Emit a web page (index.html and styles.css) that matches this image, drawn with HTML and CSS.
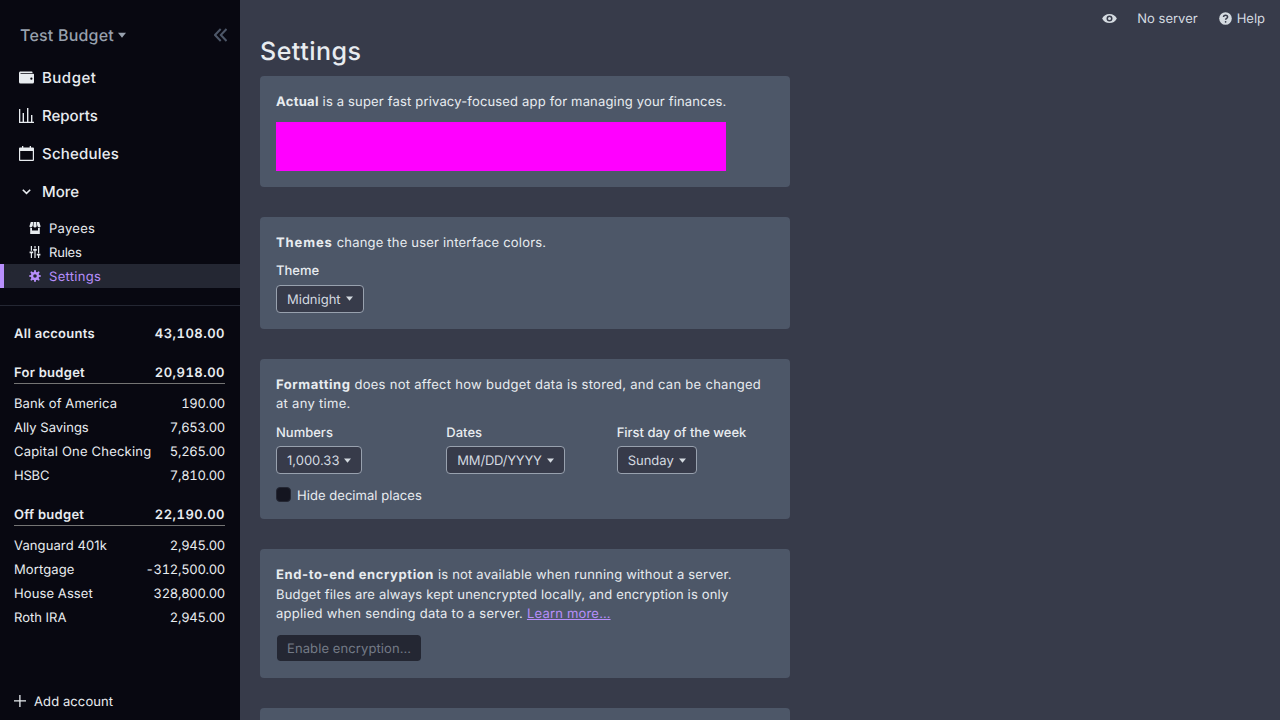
FILE: index.html
```html
<!DOCTYPE html>
<html lang="en">
<head>
<meta charset="utf-8">
<title>Settings</title>
<link rel="stylesheet" href="styles.css">
</head>
<body>
<div class="app">
  <aside class="sidebar">
    <div class="budget-name">
      <span class="ls-2">Test Budget</span>
      <svg class="caret" width="8" height="8" viewBox="0 0 8 8"><path d="M0 1.700h8L4 6.700z"/></svg>
      <svg class="collapse" width="13" height="14" viewBox="0 0 13 14"><path d="M6.700 1 1 7l5.700 6M12.500 1 6.800 7l5.700 6"/></svg>
    </div>
    <nav class="primary">
      <a class="nav-item ls-5"><svg width="15" height="15" viewBox="0 0 20 20"><path d="M0 4c0-1.100.9-2 2-2h15a1 1 0 0 1 1 1v1H2v1h17a1 1 0 0 1 1 1v10a2 2 0 0 1-2 2H2a2 2 0 0 1-2-2V4zm16.500 9a1.500 1.500 0 1 0 0-3 1.500 1.500 0 0 0 0 3z"/></svg>Budget</a>
      <a class="nav-item"><svg width="15" height="15" viewBox="0 0 15 15"><path d="M0 1h1.300v12.700H15V15H0zM3.600 5H5v9H3.600zM8 0h1.400v14H8zM12 7h1.400v7H12z"/></svg>Reports</a>
      <a class="nav-item ls-2"><svg width="15" height="15" viewBox="0 0 15 15"><path d="M1 1.500h2V0h1.300v1.500h6.400V0H12v1.500h2a1 1 0 0 1 1 1V14a1 1 0 0 1-1 1H1a1 1 0 0 1-1-1V2.500a1 1 0 0 1 1-1zM1.200 5v8.800h12.600V5z"/></svg>Schedules</a>
      <a class="nav-item"><svg width="15" height="15" viewBox="0 0 15 15"><path class="chevron" d="m3.800 5.700 3.700 3.700 3.700-3.700"/></svg>More</a>
    </nav>
    <nav class="secondary">
      <a class="sub-item ls-3"><svg width="12" height="12" viewBox="0 0 20 20"><path d="M18 9.870V20H2V9.870a4.250 4.250 0 0 0 3-.38V14h10V9.500a4.260 4.260 0 0 0 3 .37zM3 0h4l-.67 6.030A3.430 3.430 0 0 1 3 9C1.340 9 .42 7.730.95 6.150L3 0zm5 0h4l.7 6.300c.17 1.500-.91 2.700-2.420 2.700h-.56A2.380 2.380 0 0 1 7.300 6.300L8 0zm5 0h4l2.050 6.150C19.580 7.730 18.650 9 17 9a3.420 3.420 0 0 1-3.330-2.970L13 0z"/></svg>Payees</a>
      <a class="sub-item ls-tight"><svg width="12" height="12" viewBox="0 0 20 20"><path d="M17 16v4h-2v-4h-2v-3h6v3h-2zM1 9h6v3H1V9zm6-4h6v3H7V5zM3 0h2v8H3V0zm12 0h2v12h-2V0zM9 0h2v4H9V0zM3 12h2v8H3v-8zm6-4h2v12H9V8z"/></svg>Rules</a>
      <a class="sub-item active ls-3"><svg width="12" height="12" viewBox="0 0 20 20"><path d="M3.940 6.500L2.220 3.640l1.420-1.420L6.500 3.940c.52-.3 1.100-.54 1.700-.7L9 0h2l.8 3.240c.6.160 1.180.4 1.700.7l2.860-1.720 1.420 1.420-1.720 2.860c.3.520.54 1.100.7 1.700L20 9v2l-3.240.8c-.16.6-.4 1.180-.7 1.700l1.720 2.860-1.420 1.420-2.860-1.720c-.52.3-1.100.54-1.700.7L11 20H9l-.8-3.240c-.6-.16-1.180-.4-1.700-.7l-2.860 1.720-1.420-1.420 1.720-2.860c-.3-.52-.54-1.100-.7-1.700L0 11V9l3.240-.8c.16-.6.4-1.180.7-1.700zM10 13a3 3 0 1 0 0-6 3 3 0 0 0 0 6z"/></svg>Settings</a>
    </nav>
    <div class="accounts">
      <div class="row total"><span>All accounts</span><span class="num">43,108.00</span></div>
      <div class="row group"><span>For budget</span><span class="num">20,918.00</span></div>
      <div class="row"><span class="ls-1">Bank of America</span><span class="num">190.00</span></div>
      <div class="row"><span>Ally Savings</span><span class="num">7,653.00</span></div>
      <div class="row"><span class="ls-2">Capital One Checking</span><span class="num">5,265.00</span></div>
      <div class="row"><span class="ls-tight">HSBC</span><span class="num">7,810.00</span></div>
      <div class="row group"><span>Off budget</span><span class="num">22,190.00</span></div>
      <div class="row"><span class="ls-1">Vanguard 401k</span><span class="num">2,945.00</span></div>
      <div class="row"><span class="ls-1">Mortgage</span><span class="num">-312,500.00</span></div>
      <div class="row"><span class="ls-1">House Asset</span><span class="num">328,800.00</span></div>
      <div class="row"><span>Roth IRA</span><span class="num">2,945.00</span></div>
    </div>
    <a class="add-account ls-1"><svg width="12" height="12" viewBox="0 0 12 12"><path d="M5.250 0h1.300v5.250H12v1.300H6.550V12h-1.300V6.550H0v-1.300h5.250z"/></svg>Add account</a>
  </aside>
  <main class="main">
    <header class="titlebar">
      <svg class="eye" width="15" height="15" viewBox="0 0 20 20"><path d="M.2 10a11 11 0 0 1 19.600 0A11 11 0 0 1 .2 10zm9.800 4a4 4 0 1 0 0-8 4 4 0 0 0 0 8zm0-2a2 2 0 1 1 0-4 2 2 0 0 1 0 4z"/></svg>
      <span class="server">No server</span>
      <svg width="13" height="13" viewBox="0 0 13 13"><circle cx="6.500" cy="6.500" r="6.300"/><path class="question" d="M4.500 5.100c0-2.700 4.100-2.500 4.100-.2 0 1.400-2 1.500-2 2.900"/><circle class="dot" cx="6.600" cy="9.800" r=".85"/></svg>
      <span class="help">Help</span>
    </header>
    <h1 class="title">Settings</h1>
    <section class="card">
      <p class="text"><strong class="ls-3">Actual</strong> is a super fast privacy-focused app for managing your finances.</p>
      <div class="banner"></div>
    </section>
    <section class="card">
      <p class="text wide"><strong class="ls-9">Themes</strong> change the user interface colors.</p>
      <div class="field"><span class="label">Theme</span><button class="select">Midnight<svg width="7" height="8" viewBox="0 0 8 8"><path d="M0 1.200h8L4 6z"/></svg></button></div>
    </section>
    <section class="card">
      <p class="text format"><strong>Formatting</strong> does not affect how budget data is stored, and can be changed<br>at any time.</p>
      <div class="columns">
        <div class="field"><span class="label">Numbers</span><button class="select">1,000.33<svg width="7" height="8" viewBox="0 0 8 8"><path d="M0 2.200h8L4 7z"/></svg></button></div>
        <div class="field"><span class="label">Dates</span><button class="select ls-tight">MM/DD/YYYY<svg width="7" height="8" viewBox="0 0 8 8"><path d="M0 2.200h8L4 7z"/></svg></button></div>
        <div class="field"><span class="label">First day of the week</span><button class="select">Sunday<svg width="7" height="8" viewBox="0 0 8 8"><path d="M0 2.200h8L4 7z"/></svg></button></div>
      </div>
      <label class="check"><span class="box"></span>Hide decimal places</label>
    </section>
    <section class="card">
      <p class="text wide"><strong>End-to-end encryption</strong> is not available when running without a server.<br><span class="second">Budget files are always kept unencrypted locally, and encryption is only</span><br><span class="third">applied when sending data to a server.</span> <a class="link">Learn more…</a></p>
      <button class="select disabled ls-1" disabled>Enable encryption…</button>
    </section>
    <section class="card last"></section>
  </main>
</div>
</body>
</html>
```
FILE: styles.css
```css
* { box-sizing: border-box; }
body, button { font-family: Inter, "Liberation Sans", sans-serif; font-size: 13px; text-rendering: geometricPrecision; }
body { margin: 0; color: #e8ecf0; overflow: hidden; }
svg { fill: currentColor; flex: none; }
.app { display: flex; height: 720px; overflow: hidden; }
.sidebar { width: 240px; flex: none; background: #080811; display: flex; flex-direction: column; }
.budget-name { display: flex; align-items: center; height: 30px; margin-top: 20px; padding: 0 13px 0 20px; font-size: 16px; font-weight: 500; color: #98a1ae; }
.caret { margin-left: 4px; }
.collapse { margin-left: auto; fill: none; stroke: #4d5768; stroke-width: 2; }
.primary { padding-top: 8px; }
.nav-item { display: flex; align-items: center; gap: 8px; height: 38px; padding-left: 19px; font-size: 15px; font-weight: 500; }
.chevron { fill: none; stroke: currentColor; stroke-width: 1.6; }
.secondary { padding: 6px 0 17px; border-bottom: 1px solid #242733; }
.sub-item { display: flex; align-items: center; gap: 8px; height: 24px; padding: 2px 0 0 29px; }
.sub-item svg, .add-account svg, .titlebar svg { margin-top: -2px; }
.sub-item.active { background: #242733; color: #b88ffc; border-left: 4px solid #b88ffc; padding-left: 25px; }
.accounts { padding: 15px 15px 0 14px; }
.row { display: flex; align-items: center; justify-content: space-between; height: 24px; padding-top: 2px; }
.total, .group { font-weight: 600; letter-spacing: .28px; }
.group { height: 23px; margin: 16px 0 7px; border-bottom: 1px solid #747474; }
.num { font-feature-settings: "tnum"; letter-spacing: -.3px; }
.total .num, .group .num { letter-spacing: .48px; }
.add-account { display: flex; align-items: center; gap: 8px; margin: auto 0 10px; padding: 2px 0 0 14px; height: 18px; }
.main { flex: 1; background: #373b4a; padding: 0 0 0 20px; }
.titlebar { display: flex; align-items: center; height: 36px; padding: 2px 15px 0 0; color: #d4dae0; }
.titlebar .eye { margin-left: auto; }
.server { margin: 0 21px 0 20px; }
.help { margin-left: 5px; }
.question { fill: none; stroke: #373b4a; stroke-width: 1.5; }
.dot { fill: #373b4a; }
.title { margin: 0 0 9px; padding-top: 1px; font-size: 25px; line-height: 30px; font-weight: 450; letter-spacing: .5px; }
.card { width: 530px; margin-bottom: 30px; padding: 16px; border-radius: 4px; background: #4d5768; display: flex; flex-direction: column; align-items: flex-start; }
.text { margin: 0 0 9px; padding-top: 1px; line-height: 19.5px; letter-spacing: .17px; }
.text.wide { letter-spacing: .2px; }
.text.format { letter-spacing: .29px; }
.text strong { letter-spacing: .55px; }
.wide strong { letter-spacing: .6px; }
.second { letter-spacing: .17px; }
.third { letter-spacing: .25px; }
.banner { width: 450px; height: 49px; background: #f0f; }
.field { display: flex; flex-direction: column; align-items: flex-start; }
.label { font-weight: 500; line-height: 16px; padding-top: 1px; margin-bottom: 5.5px; }
.select { display: flex; align-items: center; gap: 5px; height: 28px; padding: 2px 10px 0; border: 1px solid #98a1ae; border-radius: 4px; background: #373b4a; color: #d4dae0; }
.select svg { margin-top: -2px; }
.columns { display: grid; grid-template-columns: repeat(3, 1fr); gap: 13px; width: 100%; }
.check { display: flex; align-items: center; height: 16px; margin-top: 13px; padding-top: 2px; letter-spacing: .05px; }
.box { width: 15px; height: 15px; margin: -3px 6px 0 0; border: 1px solid #242733; border-radius: 4px; background: #141520; }
.link { color: #b88ffc; text-decoration: underline; }
.disabled { border-color: #4d5768; background: #242733; background-clip: padding-box; color: #747b87; }
.last { height: 60px; }
.ls-tight { letter-spacing: -.2px; }
.ls-1 { letter-spacing: .1px; }
.ls-2 { letter-spacing: .2px; }
.ls-3, .text .ls-3 { letter-spacing: .3px; }
.ls-5 { letter-spacing: .5px; }
.text .ls-9 { letter-spacing: .9px; }
```
